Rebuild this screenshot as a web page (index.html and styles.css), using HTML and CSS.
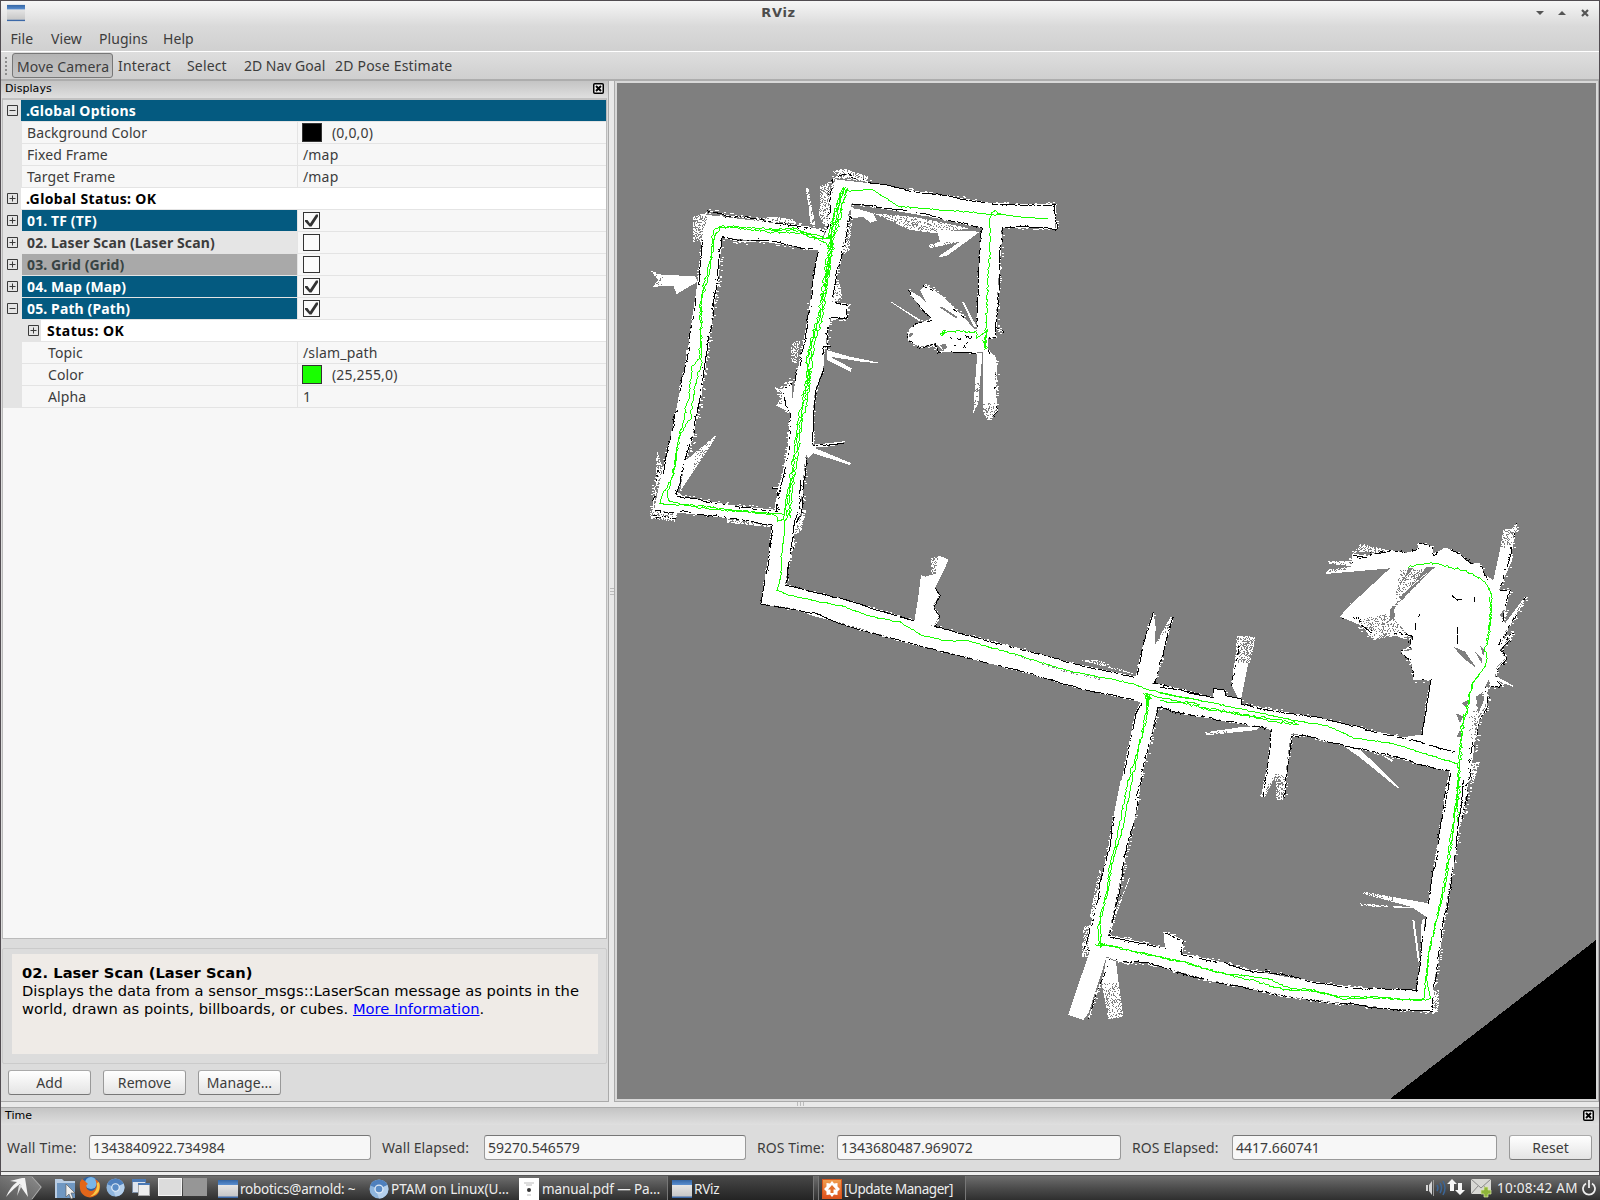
FILE: index.html
```html
<!DOCTYPE html>
<html lang="en">
<head>
<meta charset="utf-8">
<title>RViz</title>
<link rel="stylesheet" href="styles.css">
</head>
<body>
<svg width="0" height="0" class="defs">
  <defs>
    <linearGradient id="gBlue" x1="0" y1="0" x2="0" y2="1"><stop offset="0" stop-color="#3465a4"/><stop offset="1" stop-color="#5b8fd0"/></linearGradient>
    <linearGradient id="gGrey" x1="0" y1="0" x2="0" y2="1"><stop offset="0" stop-color="#f2f2f2"/><stop offset="1" stop-color="#c4c4c4"/></linearGradient>
    <linearGradient id="gOrange" x1="0" y1="0" x2="0" y2="1"><stop offset="0" stop-color="#f0a050"/><stop offset="1" stop-color="#dd4f1c"/></linearGradient>
    <symbol id="win" viewBox="0 0 20 20"><rect x="0" y="1" width="20" height="17.5" fill="url(#gGrey)"/><rect x="0" y="1" width="20" height="5" fill="url(#gBlue)"/><rect x="0" y="17.5" width="20" height="1.5" fill="#3c69a8"/></symbol>
    <symbol id="chromium" viewBox="0 0 20 20"><circle cx="10" cy="10" r="9.500" fill="#8fb6de"/><path d="M10 10 1.200 6.500A9.500 9.500 0 0 1 18.500 6Z" fill="#4f80bd"/><path d="M10 10 18.500 6A9.500 9.500 0 0 1 10 19.500L8 14Z" fill="#b5d0ec"/><circle cx="10" cy="10" r="4.600" fill="#dfeaf6"/><circle cx="10" cy="10" r="3.300" fill="#5a8cc6"/></symbol>
    <symbol id="close" viewBox="0 0 11 11"><rect x=".75" y=".75" width="9.5" height="9.5" rx="1" fill="#f4f4f4" stroke="#000" stroke-width="1.5"/><path d="M3 3 8 8M8 3 3 8" stroke="#000" stroke-width="2"/></symbol>
    <symbol id="plus" viewBox="0 0 11 11"><path d="M.5.5H10.5V10.5H.5ZM2.5 5.5H8.5M5.5 2.5V8.5" fill="none" stroke="#3a3a3a"/></symbol>
    <symbol id="minus" viewBox="0 0 11 11"><path d="M.5.5H10.5V10.5H.5ZM2.5 5.5H8.5" fill="none" stroke="#3a3a3a"/></symbol>
    <symbol id="box" viewBox="0 0 17 17"><rect x=".5" y=".5" width="16" height="16" fill="#fbfbfb" stroke="#333"/></symbol>
    <symbol id="checked" viewBox="0 0 17 17"><rect x=".5" y=".5" width="16" height="16" fill="#fbfbfb" stroke="#333"/><path d="M2 8 4.5 8 7 11.5 13 2.5 15 2.5V4.5L8.5 14.5H6.5L2 9.5Z" fill="#333"/></symbol>
  </defs>
</svg>
<div class="window">
  <header class="head">
    <div class="titlebar">
      <svg class="appicon" width="18" height="18"><use href="#win"/></svg>
      <span class="title">RViz</span>
      <svg class="winbtns" width="56" height="10" viewBox="0 0 56 10"><path d="M0 3H8L4 7ZM22 7H30L26 3Z" fill="#555"/><path d="M46 2 52 8M52 2 46 8" stroke="#555" stroke-width="2.2"/></svg>
    </div>
    <nav class="menu"><span class="m1">File</span><span class="m2">View</span><span class="m3">Plugins</span><span class="m4">Help</span></nav>
  </header>
  <div class="toolbar">
    <i class="grip"></i><span class="tool on">Move Camera</span><span class="tool t2">Interact</span><span class="tool t3">Select</span><span class="tool t4">2D Nav Goal</span><span class="tool t5">2D Pose Estimate</span>
  </div>
  <main class="work">
    <section class="dock">
      <div class="docktitle"><span>Displays</span><svg width="11" height="11"><use href="#close"/></svg></div>
      <div class="tree">
        <div class="row"><b class="gut"><svg width="11" height="11"><use href="#minus"/></svg></b><div class="full blue">.Global Options</div></div>
        <div class="row"><b class="gut"></b><div class="name">Background Color</div><div class="val"><i class="swatch black"></i>(0,0,0)</div></div>
        <div class="row"><b class="gut"></b><div class="name">Fixed Frame</div><div class="val">/map</div></div>
        <div class="row"><b class="gut"></b><div class="name">Target Frame</div><div class="val">/map</div></div>
        <div class="row"><b class="gut"><svg width="11" height="11"><use href="#plus"/></svg></b><div class="full white stat">.Global Status: OK</div></div>
        <div class="row"><b class="gut"><svg width="11" height="11"><use href="#plus"/></svg></b><div class="name bold blue">01. TF (TF)</div><div class="val"><svg width="17" height="17"><use href="#checked"/></svg></div></div>
        <div class="row"><b class="gut"><svg width="11" height="11"><use href="#plus"/></svg></b><div class="name bold sel">02. Laser Scan (Laser Scan)</div><div class="val"><svg width="17" height="17"><use href="#box"/></svg></div></div>
        <div class="row"><b class="gut"><svg width="11" height="11"><use href="#plus"/></svg></b><div class="name bold off">03. Grid (Grid)</div><div class="val"><svg width="17" height="17"><use href="#box"/></svg></div></div>
        <div class="row"><b class="gut"><svg width="11" height="11"><use href="#plus"/></svg></b><div class="name bold blue">04. Map (Map)</div><div class="val"><svg width="17" height="17"><use href="#checked"/></svg></div></div>
        <div class="row"><b class="gut"><svg width="11" height="11"><use href="#minus"/></svg></b><div class="name bold blue">05. Path (Path)</div><div class="val"><svg width="17" height="17"><use href="#checked"/></svg></div></div>
        <div class="row"><b class="gut deep"><svg width="11" height="11"><use href="#plus"/></svg></b><div class="full white sub">Status: OK</div></div>
        <div class="row"><b class="gut"></b><div class="name child">Topic</div><div class="val">/slam_path</div></div>
        <div class="row"><b class="gut"></b><div class="name child">Color</div><div class="val"><i class="swatch green"></i>(25,255,0)</div></div>
        <div class="row"><b class="gut"></b><div class="name child">Alpha</div><div class="val">1</div></div>
      </div>
      <div class="help"><div class="helptext"><strong>02. Laser Scan (Laser Scan)</strong><br>Displays the data from a sensor_msgs::LaserScan message as points in the<br>world, drawn as points, billboards, or cubes. <a>More Information</a>.</div></div>
      <div class="buttons"><span class="btn">Add</span><span class="btn">Remove</span><span class="btn">Manage...</span></div>
    </section>
    <div class="vsplit"><i></i></div>
    <section class="view"><canvas id="map" width="979" height="1016"></canvas></section>
  </main>
  <div class="hsplit"><i></i></div>
  <section class="time">
    <div class="docktitle"><span>Time</span><svg width="11" height="11"><use href="#close"/></svg></div>
    <div class="fields">
      <label>Wall Time:</label><span class="field">1343840922.734984</span>
      <label>Wall Elapsed:</label><span class="field">59270.546579</span>
      <label>ROS Time:</label><span class="field">1343680487.969072</span>
      <label>ROS Elapsed:</label><span class="field">4417.660741</span>
      <span class="btn">Reset</span>
    </div>
  </section>
  <div class="foot"></div>
</div>
<footer class="taskbar">
  <svg class="launch" width="206" height="24" viewBox="0 0 206 24">
    <defs><linearGradient id="gl" x1="0" y1="0" x2="1" y2="0"><stop offset="0" stop-color="#777"/><stop offset="1" stop-color="#aaa"/></linearGradient></defs>
    <path d="M0 0H32L42 11 32 24H0Z" fill="url(#gl)" opacity=".55"/><path d="M32 1 41 11 32 23" stroke="#aaa" fill="none"/>
    <path d="M10 5 22 2 25 2 28 21 21 11 20 8Q14 12 6 21 10 11 17 6Z" fill="#f2f2f2"/><path d="M19 9 17 20 22 9Z" fill="#ddd"/>
    <path d="M55 3H62L64 5H75V22H55Z" fill="#b9cde4"/><rect x="57" y="7" width="18" height="15" fill="#6f97c2"/><path d="M66 8V21L69 18 71 23 73 22 71 17H75Z" fill="#eee" stroke="#555" stroke-width=".6"/>
    <circle cx="90" cy="10.500" r="10" fill="#2d5f9f"/><circle cx="91" cy="7" r="6" fill="#79b6e8"/><path d="M80 6Q78 20 90 21.500 101 20 100 8 98 4 95 3 98 9 95 13 91 17 87 13 85 9 88 8 84 4 82 3Z" fill="#e2661a"/><path d="M99 6Q102 18 90 20.500 98 15 97 7Z" fill="#f7c948"/>
    <use href="#chromium" x="106" y="2" width="19" height="19"/>
    <rect x="132.500" y="3.500" width="13" height="13" fill="#dfe5ee" stroke="#7c8ea5"/><rect x="132" y="3" width="14" height="3" fill="#4c7ab5"/><rect x="138.500" y="7.500" width="11" height="12" fill="#eee" stroke="#aaa"/><rect x="138" y="7" width="12" height="2" fill="#4c7ab5"/>
    <rect x="158.500" y="2.500" width="23" height="17" fill="#dcdcdc" stroke="#f5f5f5"/><rect x="183" y="2" width="24" height="18" fill="#969696"/>
  </svg>
  <span class="task k1"><svg width="20" height="20"><use href="#win"/></svg>robotics@arnold: ~</span>
  <span class="task k2"><svg width="20" height="20"><use href="#chromium"/></svg>PTAM on Linux(U…</span>
  <span class="task k3"><svg width="20" height="22" viewBox="0 0 20 22"><rect width="20" height="22" fill="#fff"/><circle cx="10" cy="12" r="2" fill="#333"/><path d="M5 5H15M7 7H13M8 17H12" stroke="#bbb"/></svg>manual.pdf — Pa…</span>
  <span class="task k4"><svg width="20" height="20"><use href="#win"/></svg>RViz</span>
  <span class="task k5"><svg width="20" height="20" viewBox="0 0 20 20"><rect x=".5" y=".5" width="19" height="19" fill="url(#gOrange)" stroke="#d8571d"/><path d="M10 2 12 4.500 15.500 4 15.500 7.500 18 10 15.500 12.500 15.500 16 12 15.500 10 18 8 15.500 4.500 16 4.500 12.500 2 10 4.500 7.500 4.500 4 8 4.500Z" fill="#fff"/><path d="M10 6 14 10.500H11.500V14H8.500V10.500H6Z" fill="#e2702c"/></svg>[Update Manager]</span>
  <span class="tray">
    <svg width="70" height="22" viewBox="0 0 70 22"><path d="M1 8H3V14H1ZM4 8 7 4V18L4 14Z" fill="#d6d6d6"/><path d="M8.500 3V19" stroke="#999"/><path d="M12 8Q14 11 12 14M15 6Q18 11 15 16M18 4Q22 11 18 18" stroke="#3b6596" fill="none" stroke-width="1.500"/><path d="M27 2 32 7H29V14H25V7H22ZM35 18 30 13H33V6H37V13H40Z" fill="#f5f5f5"/><rect x="46" y="2" width="20" height="15" fill="#d8d8d4"/><path d="M46 2 56 11 66 2M46 17 53 9M66 17 59 9" stroke="#888" fill="none"/><path d="M59 10H63V13H66V17H63V20H59V17H56V13H59Z" fill="#8fb53a" stroke="#dbe8a8" stroke-width=".7"/></svg>
    <span class="clock">10:08:42 AM</span>
    <svg width="14" height="16" viewBox="0 0 14 16"><path d="M4 3.500A6 6 0 1 0 10 3.500M7 0V8" stroke="#eee" stroke-width="1.800" fill="none"/></svg>
  </span>
</footer>
<script src="map.js"></script>
</body>
</html>
```
FILE: styles.css
```css
* { box-sizing: border-box; }
body { margin: 0; width: 1600px; height: 1200px; overflow: hidden; background: #dcdcdc; color: #3c3c3c; font: 14px/20px "Noto Sans", sans-serif; letter-spacing: .06px; }
svg { display: block; flex: none; }
.defs { position: absolute; }
.window { height: 1176px; border: solid #514c51; border-width: 1px 1px 0; display: flex; flex-direction: column; }
.head { height: 50px; background: linear-gradient(#f6f6f6, #dadada 50%, #d0d0d0); flex: none; }
.titlebar { height: 24px; display: flex; align-items: center; justify-content: space-between; padding: 0 9px 0 6px; }
.title { font: bold 13px/20px "DejaVu Sans", sans-serif; color: #4c4c4c; margin-right: 4px; letter-spacing: .6px; }
.winbtns { margin-right: -2px; }
.menu { display: flex; height: 26px; padding: 4px 0 0 9.5px; }
.m1 { width: 40.5px; } .m2 { width: 48px; } .m3 { width: 64px; }
.toolbar { height: 28px; flex: none; border-top: 1px solid #fff; background: linear-gradient(#dedede, #cfcfcf); display: flex; align-items: center; padding-left: 4px; }
.grip { width: 2px; height: 18px; background: repeating-linear-gradient(#8c8c8c 0 2px, transparent 2px 4px); margin-right: 5px; }
.tool { height: 25px; line-height: 25px; white-space: nowrap; letter-spacing: .15px; }
.on { width: 101px; padding-left: 4px; background: linear-gradient(#b4b4b4, #c6c6c6); border: 1px solid #777; border-radius: 3px; margin-right: 5px; }
.t2 { width: 69px; } .t3 { width: 57px; } .t4 { width: 91px; letter-spacing: 0; } .t5 { letter-spacing: .2px; }
.work { height: 1023px; flex: none; display: flex; border-top: 2px solid #adadad; }
.dock { width: 608px; border-right: 1px solid #aaa; border-bottom: 1px solid #aaa; display: flex; flex-direction: column; }
.docktitle { height: 17px; flex: none; background: linear-gradient(#c4c4c4, #dfdfdf); display: flex; justify-content: space-between; align-items: flex-start; padding: 0 4px; font: 11px/16px "DejaVu Sans", sans-serif; color: #000; }
.docktitle svg { margin-top: 2px; }
.tree { margin: 0 1px; height: 841px; border: 1px solid #bbb; border-top: 2px solid #c2c2c2; background: #f7f7f7; }
.row { height: 22px; display: flex; border-bottom: 1px solid #e4e4e4; }
.gut { width: 19px; margin-bottom: -1px; background: #e4e4e4; padding: 5px 0 0 4px; flex: none; }
.deep { width: 39px; padding-left: 25px; }
.full { flex: 1; font-weight: bold; line-height: 21px; letter-spacing: .25px; margin-left: -1px; padding-left: 5px; }
.stat { letter-spacing: .38px; }
.sub { letter-spacing: .5px; padding-left: 6px; }
.name { width: 276px; padding-left: 5px; line-height: 21px; border-right: 1px solid #e4e4e4; white-space: nowrap; letter-spacing: .1px; }
.child { padding-left: 26px; }
.bold { font-weight: bold; letter-spacing: .12px; }
.blue { background: #045a80; color: #fff; }
.white { background: #fff; color: #000; }
.sel { background: #e5e5e5; }
.off { background: #a9a9a9; color: #374343; }
.val { flex: 1; padding-left: 5px; line-height: 21px; display: flex; align-items: center; letter-spacing: .16px; }
.swatch { width: 20px; height: 19px; border: 1px solid #333; margin: 0 10px 0 -1px; }
.black { background: #000; } .green { background: #19ff00; }
.help { margin: 9px 1px 0 1px; height: 116px; flex: none; border: 1px solid #cbcbcb; border-radius: 2px; padding: 5px 8px 5px 9px; }
.helptext { background: #efebe7; height: 100px; padding: 10px; font: 14.67px/18px "DejaVu Sans", sans-serif; letter-spacing: .05px; color: #000; white-space: nowrap; }
.helptext a { color: #00f; text-decoration: underline; }
.buttons { display: flex; gap: 12px; padding: 6px 0 0 7px; }
.btn { width: 83px; height: 25px; border: 1px solid #999; border-color: #aaa #999 #777; border-radius: 3px; background: linear-gradient(#fff, #e4e4e4); text-align: center; line-height: 23px; }
.vsplit { width: 5px; background: #e9e9e9; display: flex; align-items: center; justify-content: center; }
.vsplit i { width: 4px; height: 8px; background: repeating-linear-gradient(#bbb 0 1px, transparent 1px 3px); }
.view { width: 985px; border: 1px solid #aaa; border-width: 0 1px 1px; background: #d8d8d8; padding: 2px 2px 2px; }
canvas { display: block; background: #7f7f7f; }
.hsplit { height: 5px; flex: none; background: #e9e9e9; display: flex; justify-content: center; }
.hsplit i { width: 7px; height: 4px; background: repeating-linear-gradient(90deg, #bbb 0 1px, transparent 1px 3px); }
.time { height: 64px; flex: none; border-top: 1px solid #aaa; }
.time .docktitle { padding-right: 5px; }
.fields { display: grid; grid-template-columns: 82px 282px 113px 262px 91px 284px 111px 265px 12px 83px; padding: 10px 0 0 6px; }
.fields label { line-height: 25px; } .fields label:not(:first-child) { padding-left: 11px; }
.fields label:first-child { letter-spacing: .2px; }
.field { height: 25px; line-height: 23px; border: 1px solid #999; border-top-color: #777; border-radius: 3px; background: #f7f7f7; padding-left: 3px; letter-spacing: 0; }
.fields .btn { grid-column: 10; }
.foot { flex: 1; border-top: 1px solid #555; border-bottom: 1px solid #555; background: #eee; }
.taskbar { height: 24px; background: linear-gradient(#6e6e6e, #4c4c4c 50%, #2f2f2f); display: flex; color: #eee; align-items: center; }
.launch { margin-right: 12px; overflow: visible; }
.task { display: flex; align-items: center; gap: 2px; white-space: nowrap; height: 24px; padding-top: 2px; font-size: 13.5px; letter-spacing: -.25px; }
.k1 { width: 151px; } .k2 { width: 150px; letter-spacing: 0; } .k3 { width: 148px; letter-spacing: -.1px; gap: 3px; }
.k4 { width: 147px; padding-left: 4px; gap: 2px; border: solid #777; border-width: 0 1px; background: linear-gradient(#484848, #232323); }
.k5 { width: 148px; margin-left: 4px; padding-left: 3px; gap: 2px; border: solid #777; border-width: 0 1px; background: linear-gradient(#555, #2a2a2a); letter-spacing: -.45px; }
.tray { margin-left: auto; display: flex; align-items: center; padding-right: 4px; }
.clock { width: 87px; padding-left: 2px; white-space: nowrap; font-size: 13.5px; letter-spacing: .25px; }
```
FILE: map.js
```js
const OX = 617, OY = 83, W = 979, H = 1016;
const cv = document.getElementById('map');
const ctx = cv.getContext('2d');
ctx.fillStyle = '#7f7f7f';
ctx.fillRect(0, 0, W, H);

let seed = 20120801;
function rnd() {
  seed = (seed * 1664525 + 1013904223) >>> 0;
  return seed / 4294967296;
}
const WHITE = '#fff', GREY = '#7f7f7f', BLACK = '#000', GREEN = '#19ff00';

// Map tiles: origin of each tile on the page, in cells of a third of a pixel.
const TILE = { A: [630, 150], B: [740, 480], C: [1160, 500], D: [1040, 780] };
function P(tile, s) {
  const t = TILE[tile];
  return s.trim().split(/\s+/).map(q => {
    const [x, y] = q.split(',').map(Number);
    return [t[0] + x / 3 - OX, t[1] + y / 3 - OY];
  });
}
function dot(x, y, c) {
  ctx.fillStyle = c;
  ctx.fillRect(Math.round(x), Math.round(y), 1, 1);
}
function scan(p, cb) {
  const ys = p.map(q => q[1]);
  for (let y = Math.floor(Math.min(...ys)); y <= Math.max(...ys); y++) {
    const xs = [];
    for (let i = 0; i < p.length; i++) {
      const a = p[i], b = p[(i + 1) % p.length];
      if ((a[1] <= y + .5) !== (b[1] <= y + .5)) xs.push(a[0] + (y + .5 - a[1]) / (b[1] - a[1]) * (b[0] - a[0]));
    }
    xs.sort((m, n) => m - n);
    for (let i = 0; i + 1 < xs.length; i += 2) cb(Math.round(xs[i]), Math.round(xs[i + 1]), y);
  }
}
function fill(t, s, c = WHITE) {
  ctx.fillStyle = c;
  scan(P(t, s), (a, b, y) => { ctx.fillStyle = c; ctx.fillRect(a, y, b - a, 1); });
}
function speckle(t, s, density = .5, c = WHITE) {
  scan(P(t, s), (a, b, y) => { for (let x = a; x < b; x++) if (rnd() < density) dot(x, y, c); });
}
// Ragged occupied cells along a boundary, with stray free cells round it.
function wall(t, s, rough = 1, ink = .72) {
  const p = P(t, s);
  let o = 0, on = true;
  if (t === 'B') rough *= .7;
  const black = [];
  for (let i = 0; i + 1 < p.length; i++) {
    const [x0, y0] = p[i], [x1, y1] = p[i + 1];
    const L = Math.hypot(x1 - x0, y1 - y0), nx = -(y1 - y0) / L, ny = (x1 - x0) / L;
    for (let d = 0; d < L; d += .8) {
      if (rnd() < .25) o += (rnd() - .5) * 2 * rough;
      if (rnd() < .4) on = rnd() < ink;
      o = Math.max(-1.1 * rough, Math.min(1.1 * rough, o));
      const x = x0 + (x1 - x0) * d / L, y = y0 + (y1 - y0) * d / L;
      dot(x + nx * o * .5, y + ny * o * .5, WHITE);
      if (rnd() < .35 * rough) { const k = (rnd() - .5) * 4.6 * rough; dot(x + nx * k, y + ny * k, WHITE); dot(x + nx * k + 1, y + ny * k, WHITE); }
      if (on) black.push([x + nx * o, y + ny * o]);
      if (on && rnd() < .07 * rough) black.push([x + nx * o * 2.2, y + ny * o * 2.2]);
    }
  }
  black.forEach(q => dot(q[0], q[1], BLACK));
}
function line(x0, y0, x1, y1) {
  const n = Math.max(1, Math.ceil(Math.max(Math.abs(x1 - x0), Math.abs(y1 - y0))));
  for (let i = 0; i <= n; i++) dot(x0 + (x1 - x0) * i / n, y0 + (y1 - y0) * i / n, GREEN);
}
function path(t, s, j = .5, dx = 0, dy = 0) {
  const p = P(t, s);
  j = j * 1.4 + .15;
  let [px, py] = [p[0][0] + dx, p[0][1] + dy];
  for (let i = 0; i + 1 < p.length; i++) {
    const [x0, y0] = p[i], [x1, y1] = p[i + 1];
    const n = Math.max(1, Math.round(Math.hypot(x1 - x0, y1 - y0) / 2.4));
    for (let k = 1; k <= n; k++) {
      const x = x0 + (x1 - x0) * k / n + (rnd() - .5) * 2 * j + dx, y = y0 + (y1 - y0) * k / n + (rnd() - .5) * 2 * j + dy;
      line(px, py, x, y);
      px = x; py = y;
    }
  }
}

// Sparse laser hits
speckle('A', '190,200 235,185 225,270 190,275', .6);
speckle('A', '570,110 600,95 605,180 585,240 568,200', .6);
speckle('A', '527,112 535,115 556,225 542,225', .75);
speckle('A', '608,62 640,55 715,80 710,95 620,85', .6);
speckle('A', '640,230 665,220 660,300 630,320', .6);
speckle('A', '612,400 630,400 637,450 610,455', .7);
speckle('A', '730,190 850,200 1020,235 920,250 840,240', .75);
speckle('A', '485,580 510,570 500,640 482,640', .5);
speckle('A', '80,900 95,940 92,1000 78,1000', .6);
speckle('A', '60,1080 140,1085 135,1115 60,1105', .65);
speckle('A', '495,1080 525,1080 515,1140 495,1150', .5);
speckle('A', '290,1108 425,1125 425,1132 290,1118', .6);
speckle('A', '390,205 430,200 490,208 500,220 400,215', .7);
speckle('B', '160,90 200,90 180,160 160,155', .5);
speckle('B', '1020,540 1090,560 1190,585 1075,540', .5);
speckle('C', '230,408 287,410 270,490 225,490', .6);
speckle('C', '600,130 680,150 690,160 585,155', .6);
speckle('C', '570,310 690,320 760,300 745,400 640,420 600,375', .8);
speckle('C', '930,790 960,785 940,850 925,840', .65);
speckle('D', '1175,630 1197,630 1195,695 1175,700', .65);
speckle('D', '130,440 150,430 150,530 125,530', .5);
speckle('D', '176,270 185,270 160,420 150,410', .6);
speckle('D', '268,290 271,290 212,450 208,445', .7);

// Free space, northern loop
fill('A', '235,195 400,215 585,240 565,300 400,275 275,262 262,400 245,500 230,620 210,750 185,870 160,950 140,1035 300,1065 440,1080 425,1125 300,1105 72,1080 95,970 125,850 150,720 175,590 190,480 205,380 215,270');
fill('A', '615,88 720,100 900,130 1090,160 1275,162 1275,237 1115,230 1108,350 1100,460 1097,560 1075,565 1075,605 1040,605 1042,500 1048,350 1055,235 900,200 750,175 665,160 655,195 640,280 620,370 607,455 652,462 650,505 600,505 590,560 583,610 580,655 555,720 548,790 548,880 525,925 520,980 510,1080 495,1130 485,1205 417,1205 425,1125 440,1080 455,980 472,900 480,790 495,700 515,600 530,520 550,400 565,300 590,240 600,170');
fill('A', '1040,545 1000,500 940,440 890,405 870,420 890,460 870,440 835,420 905,510 860,520 835,540 850,552 835,568 872,590 915,580 945,605 1042,612');
fill('A', '1042,610 1035,700 1030,790 1045,760 1057,610');
fill('A', '1060,600 1060,790 1075,810 1100,775 1095,680 1100,630 1078,600');
fill('A', '995,455 1003,458 1040,530 1032,530');
fill('A', '783,457 787,457 872,510 868,514');
fill('A', '60,362 100,375 195,378 203,395 140,432 130,408 68,410 85,390');
fill('A', '590,600 660,620 757,640 700,636 600,620 665,655 662,665 590,630');
fill('A', '545,885 650,873 610,888 552,893 665,940 660,945 550,910 535,925 520,900');
fill('A', '432,710 455,720 485,695 485,790 435,765 455,745');
fill('A', '660,170 730,190 740,212 720,218 700,200 665,205');
fill('A', '920,240 1050,245 950,318 922,322 990,275 900,295 895,285 930,275');
fill('A', '165,930 175,925 262,852 240,890 150,1025');

// Long diagonal corridor
fill('B', '120,0 185,0 165,120 150,220 135,315 300,355 520,420 600,445 800,495 1000,550 1190,590 1240,612 1385,642 1385,712 1250,680 1205,665 1070,638 970,612 870,580 700,535 510,490 310,430 225,410 160,385 63,370 85,230 95,135');
fill('B', '523,422 535,350 543,285 555,290 573,285 573,235 600,228 625,238 615,265 585,325 598,345 578,380 596,408 582,438');
fill('B', '1187,592 1200,530 1215,470 1240,395 1247,440 1245,495 1270,450 1293,408 1298,420 1265,530 1243,612');
fill('B', '1205,660 1185,700 1145,900 1200,900 1230,780 1252,680');

// Southern loop and the open room
fill('C', '0,560 160,592 160,567 195,570 197,585 240,595 245,612 400,640 510,660 650,695 730,712 785,703 800,600 812,537 760,540 757,490 725,455 755,450 755,405 725,415 690,395 640,415 600,375 540,350 560,325 690,205 495,222 505,208 575,200 505,190 505,182 575,182 578,160 620,168 690,155 740,160 775,150 775,132 815,138 820,165 855,145 900,165 930,190 960,195 975,225 1000,240 1020,150 1030,90 1065,80 1057,130 1055,185 1015,270 1050,275 1035,320 1020,345 1035,370 1095,290 1015,432 1060,395 1020,450 1035,475 1010,500 1005,530 1025,555 985,560 975,620 955,650 945,700 940,770 925,830 915,900 901,965 847,965 860,870 868,812 800,798 660,760 550,735 400,700 392,705 380,790 372,900 350,900 345,830 315,890 303,890 325,780 335,685 130,650 0,622');
fill('C', '215,555 222,490 265,490 240,612 235,595');
fill('C', '135,697 250,680 300,680 290,690 140,706');
fill('C', '550,738 600,750 645,790 718,862 712,864 640,805 590,765');
fill('C', '660,762 700,780 695,785');
fill('C', '1010,530 1062,558 1058,560 1008,540');
fill('D', '230,60 293,60 262,200 230,350 205,465 300,485 375,505 370,455 400,465 430,480 425,520 520,540 640,572 800,602 950,622 1130,632 1145,500 1158,410 1120,385 1120,385 960,378 960,370 1120,382 970,342 970,335 1165,370 1185,240 1205,120 1222,0 1272,0 1262,120 1250,190 1225,330 1200,500 1180,620 1175,695 1060,685 900,668 740,648 640,625 500,598 400,570 310,545 235,545 200,530 145,700 130,720 85,705 150,510 145,480 155,420 180,310 205,200');
fill('D', '242,0 302,0 293,90 220,110');
fill('D', '200,532 228,545 236,610 185,610');
speckle('D', '185,610 236,608 250,710 205,718', .72);
fill('D', '1117,420 1123,420 1140,545 1134,545');
fill('D', '1145,420 1155,415 1152,450 1142,500');

// Unseen patches inside free space
['725,285 825,200 720,305', '745,205 760,205 730,240', '775,215 795,205 730,250', '800,200 830,200 785,230 750,262', '690,330 700,315 705,350 690,365', '880,440 915,455 950,505 910,475', '945,455 965,475 965,490', '960,435 972,450 970,470', '905,610 925,600 920,625', '888,640 910,650 900,670', '900,690 908,712 890,710', '985,225 1000,225 1000,235', '948,590 970,575 972,600 955,640', '945,670 955,660 950,700', '975,560 985,540 1000,570'].forEach(s => fill('C', s, GREY));
fill('A', '670,165 705,168 700,175 672,176', GREY);
fill('A', '1030,232 1050,232 1050,242 1035,240', GREY);
fill('A', '925,470 935,470 985,502 975,503', GREY);
fill('A', '945,580 955,590 940,600 930,585', GREY);
speckle('A', '1030,700 1060,700 1060,760 1030,790', .25, GREY);
speckle('A', '1060,760 1100,760 1075,810 1060,800', .25, GREY);
speckle('A', '200,890 262,852 240,890 190,960', .25, GREY);
speckle('A', '60,362 100,375 100,405 68,410', .2, GREY);
speckle('A', '895,280 990,275 922,322', .25, GREY);
speckle('A', '432,710 455,720 455,765 435,765', .3, GREY);
speckle('B', '800,518 980,570 1080,595 1080,600 970,575', .3, GREY);
speckle('B', '573,235 595,230 585,290 573,285', .4, GREY);
speckle('B', '1262,455 1298,408 1290,440 1250,495', .3, GREY);
speckle('C', '1028,80 1068,70 1060,130 1018,150', .28, GREY);
speckle('C', '303,890 345,820 380,830 372,900', .4, GREY);
speckle('C', '135,695 220,682 220,695 140,706', .25, GREY);
speckle('C', '495,222 505,180 575,180 575,205', .25, GREY);
speckle('C', '720,210 820,205 700,330 690,390 705,300', .22, GREY);
speckle('C', '590,360 690,340 740,400 640,420', .3, GREY);
speckle('C', '925,655 955,600 945,780 928,780', .15, GREY);
speckle('D', '960,330 1060,350 1060,385 960,380', .3, GREY);

// Walls
wall('A', '232,180 300,195 400,212 500,222 588,240', 1.3);
wall('A', '275,262 330,275 400,272 565,298 550,400 530,520 515,600 495,700', 1.1);
wall('A', '480,790 472,900 455,980 440,1030 440,1080 300,1065 140,1035', 1);
wall('A', '215,270 205,380 190,480 175,590 150,720 125,850 95,970', .9);
wall('A', '275,262 262,400 245,500 230,620 210,750 185,870 160,950 140,1035', 1.1);
wall('A', '85,960 75,1020 70,1080 140,1090', 1.8);
wall('A', '70,1095 135,1100', 1.4, .5);
wall('A', '150,1082 300,1105 425,1125', .9);
wall('A', '588,235 600,170 610,85 650,70 720,98', 1.4);
wall('A', '720,98 900,130 1090,160 1275,162 1278,235 1115,230', .9, .85);
wall('A', '665,160 750,168 900,195 1055,230', .8);
wall('A', '665,200 655,195 640,280 620,370 607,440', 1);
wall('A', '610,455 652,462 650,505 600,505 590,560 590,600', 1);
wall('A', '580,655 555,720 548,790 548,880', .4, .85);
wall('A', '550,885 640,880', .6);
wall('A', '575,612 580,590 600,590', 1);
wall('A', '525,925 520,980 510,1080 495,1130 485,1200', 1.2);
wall('A', '1055,235 1048,350 1042,500 1040,540', .8);
wall('A', '1115,232 1108,350 1100,460 1097,560 1078,565', .9);
wall('A', '1097,530 1120,550', 1.4, .5);
wall('A', '880,405 905,415 1000,500', 1, .4);
wall('A', '835,420 905,510 860,520 835,545 835,570 872,590 915,580 920,605', .9, .55);
wall('A', '920,608 945,602 1040,610', .4, .8);
wall('A', '945,560 980,570 1030,560 990,590 950,580', 1.8, .5);
wall('A', '1075,600 1098,640 1095,740 1100,780 1070,808', 1, .3);
wall('A', '485,690 450,720 460,760 480,790', 1.8, .4);
wall('A', '425,1130 417,1200', .5);
wall('B', '95,135 85,230 63,370 160,385 225,400 310,432', .8);
wall('B', '310,432 510,490 700,535 870,580 970,612 1205,665 1185,700 1165,800', .7);
wall('B', '180,0 180,80 165,120 150,220 135,315', .9);
wall('B', '135,315 300,355 520,420', .7, .85);
wall('B', '582,438 800,495 1000,550 1187,590 1200,530 1215,470 1240,395', .8);
wall('B', '585,325 598,345 578,380 596,408 582,438', .8, .8);
wall('B', '1298,410 1265,530 1240,610 1380,640', .8);
wall('B', '1252,680 1380,710', .8);
wall('B', '1252,680 1243,740 1225,800 1185,960', 1.2);
wall('B', '1165,800 1150,880', .7);
wall('B', '95,20 115,20 108,90', 1.2, .6);
wall('C', '0,560 160,592 160,565 195,570 197,585 240,595 245,612 400,640 510,660 650,695 885,752', .8, .85);
wall('C', '0,622 130,650 335,685 325,780 305,890', .8, .7);
wall('C', '372,890 380,790 392,705 440,705 550,735 660,760 868,812 860,870 847,960', .8);
wall('C', '785,703 800,600 812,537', .4, .95);
wall('C', '812,537 760,535 757,490 725,455 755,440 755,405 690,400', 1.5, .45);
wall('C', '545,350 600,350 600,375 645,415', 1.5, .35);
wall('C', '575,200 575,160 620,168 690,155 740,160 775,150 775,132 815,138 820,165 855,145 900,165 930,190 955,190 980,240', 1.2, .55);
wall('C', '1068,70 1050,180 1015,270 1050,270 1035,320 1030,365', .9, .45);
wall('C', '1095,290 1015,432 1060,395 1020,450 1035,475 1010,500 1005,530 1025,555 985,560', 1.2, .5);
wall('C', '975,560 975,620 955,650 940,740 932,780 915,900 903,960', 1.6, .5);
wall('C', '215,555 222,500 240,420', .6, .4);
wall('C', '875,285 885,293 905,298', .7, .7);
wall('C', '943,290 943,305', .2, .8);
wall('C', '891,380 891,435', .2, .8);
wall('C', '780,340 768,360 765,390', .4, .6);
wall('D', '222,110 205,200 180,310 155,420 130,500 150,515', 1);
wall('D', '293,50 255,230 230,350 205,465 300,485 375,503', 1);
wall('D', '375,455 400,468 428,482 425,520 520,540 640,572 720,580', 1, .8);
wall('D', '720,580 800,602 950,622 1130,632 1145,500 1158,410', .8, .8);
wall('D', '1165,370 1185,240 1205,120 1222,0', .8, .7);
wall('D', '1270,0 1250,190 1225,330 1200,500 1182,620', .9, .75);
wall('D', '1178,640 1175,695 1060,685 900,668 740,648', .9, .75);
wall('D', '740,648 640,625 500,598 400,570 310,545 235,545 228,535', .9, .75);
wall('D', '210,530 175,620 145,715', .6, .5);

// Robot trajectory
path('A', '645,120 660,121 725,117 805,168 930,178 1020,185 1090,193 1110,192 1180,200 1252,205', .3);
path('A', '1110,190 1095,180 1083,188 1078,215 1078,300 1072,400 1068,500 1062,595', .6);
path('A', '1040,560 1050,560 1068,540 1062,590', .9);
path('A', '1062,560 1066,590 1060,570 1064,595', 1);
path('A', '930,550 945,540 935,555 928,548 945,548 960,542 1000,543 1035,545 1042,565', .7);
const main = '645,110 625,170 605,240 600,290 590,350 580,430 570,500 545,570 535,650 525,740 510,800 500,880 485,980 470,1095';
path('A', main, .8);
path('A', main, 1, -1.6, 0);
path('A', main, .9, 2.2, 1);
path('A', '640,110 628,150 610,200 600,250 603,290 595,330 585,400 578,460', 1.5);
path('A', '650,115 635,160 625,230 600,265 603,300 590,400', 1.2);
path('A', '545,570 530,630 540,700 518,735', 1.2);
path('A', '600,265 500,240 420,235 300,228 265,228 248,240 242,310 235,370 215,440 212,500 212,560 205,620 185,650 175,740 150,840 135,930 125,980 90,1045 90,1060 200,1065 300,1078 400,1088 460,1090', .6);
path('A', '600,290 540,250 420,245 300,230 270,230 252,260 243,320 220,400 208,470 212,640 195,700 180,800 145,860 130,960 112,1030 115,1052 200,1070 300,1080 430,1092 445,1110 465,1108 480,1080', .6);
path('A', '600,265 540,262 500,232 420,240', .8);
path('B', '150,0 135,60 130,110 133,150 122,230 122,290 108,330 150,345 230,362 310,378 380,405 480,425 545,465 620,482 680,480 800,515 980,570 1080,590 1180,610 1215,625 1300,645 1380,660', .25);
path('B', '1215,640 1290,658 1380,672', .5);
path('B', '1210,640 1225,660 1215,635 1230,655 1212,650 1235,650 1220,670', 1.2);
path('B', '1222,650 1212,720 1200,780 1175,900', .7);
path('B', '1225,655 1218,720 1202,780 1163,900', .6);
path('C', '0,578 160,608 300,638 430,665 500,675 580,712 700,730 780,755 890,790', .25);
path('C', '0,600 120,618 240,640 330,662 412,672', .7);
path('C', '120,622 250,645 340,655 412,670', .7);
path('C', '745,200 810,187 915,210 970,240 995,280 988,380 975,450 980,480 955,525 935,550 922,620 902,680 905,720 895,770 893,820 890,900 880,960', .8);
path('C', '988,290 988,380 978,430', 1);
path('C', '955,525 935,550 922,600 915,650 902,700 903,740 900,770 895,850 893,960', 1.1);
path('D', '275,0 245,150 215,250 205,320 185,400 172,440 175,490 240,505 330,525 430,545 540,578 640,588 680,592 750,625 820,628 910,655 1000,652 1140,660 1170,655 1160,600 1165,520 1190,410 1215,290 1230,170 1248,80 1255,0', .5);
path('D', '262,0 240,120 205,270 200,330 180,410 180,490 330,522 430,545 540,578 640,600 730,628 820,632 900,650 1000,650 1060,655 1150,658 1155,600 1165,520 1190,410 1220,290 1238,150 1253,0', .5);
path('D', '165,492 190,495 175,485 180,500 170,488 195,492', 1.2);

// Area outside the grid
fill('A', '2898,2370 2898,2850 2276,2850', BLACK);
```
